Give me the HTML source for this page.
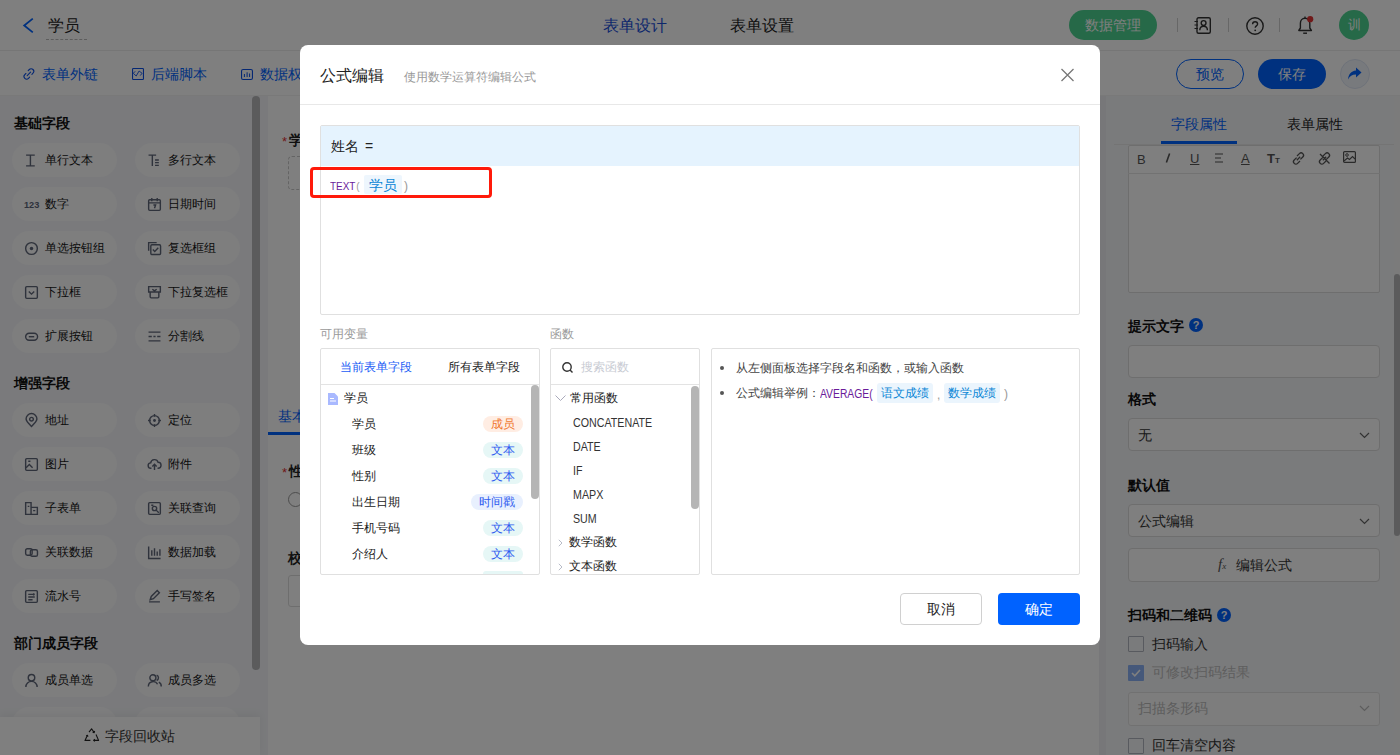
<!DOCTYPE html>
<html><head><meta charset="utf-8">
<style>
*{box-sizing:border-box;margin:0;padding:0}
html,body{width:1400px;height:755px;overflow:hidden;background:#fff;font-family:"Liberation Sans",sans-serif;color:#333}
.a{position:absolute}
.t{position:absolute;white-space:nowrap;line-height:1}
svg{position:absolute;overflow:visible}
.pill{position:absolute;width:105px;height:34px;border-radius:17px;background:#fcfcfd}
.pl{position:absolute;white-space:nowrap;line-height:1;font-size:12px;color:#151515}
.sec{position:absolute;white-space:nowrap;line-height:1;font-size:14px;font-weight:700;color:#111}
.ic{position:absolute;fill:none;stroke:#5b6170;stroke-width:1.3}
.sep{position:absolute;width:1px;height:14px;top:18px;background:#cfcfcf}
.fn{font-size:12px;color:#333;transform:scaleX(0.89);transform-origin:0 0}
</style></head><body>
<!-- ===== HEADER ===== -->
<div class="a" style="left:0;top:0;width:1400px;height:51px;background:#fff;border-bottom:1px solid #ededed"></div>
<svg style="left:22px;top:17px" width="12" height="17" viewBox="0 0 12 17"><path d="M10.8 1.6 L2.2 8.5 L10.8 15.4" fill="none" stroke="#0062ff" stroke-width="1.8"/></svg>
<div class="t" style="left:48px;top:18px;font-size:16px;color:#222">学员</div>
<div class="a" style="left:46px;top:39px;width:41px;border-top:1px dashed #bbb"></div>
<div class="t" style="left:603px;top:18px;font-size:16px;color:#1a4fd8">表单设计</div>
<div class="t" style="left:730px;top:18px;font-size:16px;color:#222">表单设置</div>
<div class="a" style="left:1069px;top:10px;width:88px;height:30px;border-radius:15px;background:#4cd291"></div>
<div class="t" style="left:1085px;top:18px;font-size:14px;color:#fff">数据管理</div>
<div class="sep" style="left:1177px"></div>
<div class="sep" style="left:1228px"></div>
<div class="sep" style="left:1279px"></div>
<!-- contacts icon -->
<svg style="left:1194px;top:17px" width="17" height="17" viewBox="0 0 17 17"><rect x="3" y="0.7" width="13.3" height="15.6" rx="1.5" fill="none" stroke="#333" stroke-width="1.4"/><circle cx="9.6" cy="6" r="2.4" fill="none" stroke="#333" stroke-width="1.4"/><path d="M5.8 13.2c0-2.4 1.7-4 3.8-4s3.8 1.6 3.8 4" fill="none" stroke="#333" stroke-width="1.4"/><path d="M0.5 4.5h3.5M0.5 8h3.5M0.5 11.5h3.5" stroke="#333" stroke-width="1.2"/></svg>
<!-- help -->
<svg style="left:1246px;top:17px" width="18" height="18" viewBox="0 0 18 18"><circle cx="9" cy="9" r="8.2" fill="none" stroke="#333" stroke-width="1.4"/><path d="M6.6 7.2c0-1.5 1.1-2.5 2.5-2.5s2.5 1 2.5 2.3c0 1.9-2.4 1.9-2.4 3.7" fill="none" stroke="#333" stroke-width="1.4"/><circle cx="9.2" cy="13.3" r="0.9" fill="#333"/></svg>
<!-- bell -->
<svg style="left:1298px;top:16px" width="15" height="19" viewBox="0 0 15 19"><path d="M7 2.2c-2.8 0-4.6 2.2-4.6 5v4.8L0.8 14.5h12.6L11.8 12V7.2c0-2.8-1.9-5-4.8-5z" fill="none" stroke="#333" stroke-width="1.4" stroke-linejoin="round"/><path d="M5.2 17.2h3.8" stroke="#333" stroke-width="1.4"/><path d="M7 0.5v1.6" stroke="#333" stroke-width="1.3"/><circle cx="12.2" cy="3.2" r="3.1" fill="#e03333"/></svg>
<div class="a" style="left:1339px;top:10px;width:30px;height:30px;border-radius:15px;background:#4cd291"></div>
<div class="t" style="left:1348px;top:18px;font-size:13px;color:#fff">训</div>

<!-- ===== TOOLBAR ===== -->
<div class="a" style="left:0;top:51px;width:1400px;height:45px;background:#fff;border-bottom:1px solid #f2f2f2"></div>
<svg style="left:22px;top:67px" width="14" height="14" viewBox="0 0 14 14"><path d="M6.2 3.6 L7.3 2.5 a2.6 2.6 0 0 1 3.7 3.7 L9.9 7.3" fill="none" stroke="#0a4fe6" stroke-width="1.1" stroke-linecap="round"/><path d="M7.6 10.2 L6.5 11.3 a2.6 2.6 0 0 1-3.7-3.7 L3.9 6.5" fill="none" stroke="#0a4fe6" stroke-width="1.1" stroke-linecap="round"/><path d="M5.2 8.6 L8.6 5.2" stroke="#0a4fe6" stroke-width="1.1" stroke-linecap="round"/></svg>
<div class="t" style="left:42px;top:67px;font-size:14px;color:#0062ff">表单外链</div>
<svg style="left:132px;top:68px" width="12" height="12" viewBox="0 0 12 12"><rect x="0.55" y="0.55" width="10.9" height="10.9" rx="0.8" fill="none" stroke="#0a4fe6" stroke-width="1.1"/><path d="M3.2 3.3L1.3 5.3 4.2 8 7.1 3 10.1 5.3 8.2 7.6" fill="none" stroke="#0a4fe6" stroke-width="0.9"/></svg>
<div class="t" style="left:151px;top:67px;font-size:14px;color:#0062ff">后端脚本</div>
<svg style="left:241px;top:69px" width="12" height="11" viewBox="0 0 12 11"><rect x="0.55" y="0.55" width="10.9" height="9.9" rx="1.5" fill="none" stroke="#0a4fe6" stroke-width="1.1"/><path d="M3.4 5v3M6.1 3.3v4.7M8.6 4.5v3.5" fill="none" stroke="#0a4fe6" stroke-width="1"/></svg>
<div class="t" style="left:260px;top:67px;font-size:14px;color:#0062ff">数据权限</div>
<div class="a" style="left:1176px;top:59px;width:68px;height:30px;border-radius:15px;border:1px solid #0062ff"></div>
<div class="t" style="left:1196px;top:67px;font-size:14px;color:#0062ff">预览</div>
<div class="a" style="left:1258px;top:59px;width:68px;height:30px;border-radius:15px;background:#0062ff"></div>
<div class="t" style="left:1278px;top:67px;font-size:14px;color:#fff">保存</div>
<div class="a" style="left:1340px;top:59px;width:30px;height:30px;border-radius:15px;background:#f0f4fb;border:1px solid #dde5f3"></div>
<svg style="left:1347px;top:67px" width="16" height="14" viewBox="0 0 16 14"><path d="M9 0.5 L14.5 5.5 L9 10.5 V7.5 C5 7.5 2.8 9 1 12.5 C1.5 7.5 4 4 9 3.5z" fill="#0062ff"/></svg>

<!-- ===== LEFT PANEL ===== -->
<div class="a" style="left:0;top:96px;width:268px;height:659px;background:#f4f5f8"></div>
<div class="a" style="left:252px;top:96px;width:8px;height:574px;border-radius:4px;background:#b6b7b9"></div>
<div class="sec" style="left:14px;top:116px">基础字段</div>
<div class="pill" style="left:12px;top:143px"></div>
<svg style="left:25px;top:154px" width="13" height="13" viewBox="0 0 12 12"><path d="M1 1h8M5 1v10M1 11h8" stroke="#5f6678" stroke-width="1.3" fill="none"/></svg>
<div class="pl" style="left:45px;top:154px">单行文本</div>
<div class="pill" style="left:135px;top:143px"></div>
<svg style="left:148px;top:154px" width="13" height="13" viewBox="0 0 12 12"><path d="M0.5 1h7M4 1v10M6.5 5.5h3.5M6.5 8h3.5M6.5 10.5h3.5" stroke="#5f6678" stroke-width="1.3" fill="none"/></svg>
<div class="pl" style="left:168px;top:154px">多行文本</div>
<div class="pill" style="left:12px;top:187px"></div>
<svg style="left:25px;top:198px" width="13" height="13" viewBox="0 0 12 12"><text x="-1" y="9" font-size="8.5" font-weight="bold" fill="#5d6578" font-family="Liberation Sans">123</text></svg>
<div class="pl" style="left:45px;top:198px">数字</div>
<div class="pill" style="left:135px;top:187px"></div>
<svg style="left:148px;top:198px" width="13" height="13" viewBox="0 0 12 12"><rect x="0.6" y="1.6" width="10.8" height="9.8" rx="1" stroke="#5f6678" stroke-width="1.3" fill="none"/><path d="M0.6 4.5h10.8M3.5 0v3M8.5 0v3M5 6.5h2l-1 3" stroke="#5f6678" stroke-width="1.3" fill="none"/></svg>
<div class="pl" style="left:168px;top:198px">日期时间</div>
<div class="pill" style="left:12px;top:231px"></div>
<svg style="left:25px;top:242px" width="13" height="13" viewBox="0 0 12 12"><circle cx="6" cy="6" r="5.4" stroke="#5f6678" stroke-width="1.3" fill="none"/><circle cx="6" cy="6" r="1.6" fill="#5d6578"/></svg>
<div class="pl" style="left:45px;top:242px">单选按钮组</div>
<div class="pill" style="left:135px;top:231px"></div>
<svg style="left:148px;top:242px" width="13" height="13" viewBox="0 0 12 12"><path d="M0.6 8V0.6H8" stroke="#5f6678" stroke-width="1.3" fill="none"/><rect x="2.6" y="2.6" width="9" height="9" rx="1" stroke="#5f6678" stroke-width="1.3" fill="none"/><path d="M4.5 7l1.7 1.7 3.3-3.3" stroke="#5f6678" stroke-width="1.3" fill="none"/></svg>
<div class="pl" style="left:168px;top:242px">复选框组</div>
<div class="pill" style="left:12px;top:275px"></div>
<svg style="left:25px;top:286px" width="13" height="13" viewBox="0 0 12 12"><rect x="0.6" y="0.6" width="10.8" height="10.8" rx="1" stroke="#5f6678" stroke-width="1.3" fill="none"/><path d="M3.5 5l2.5 2.5L8.5 5" stroke="#5f6678" stroke-width="1.3" fill="none"/></svg>
<div class="pl" style="left:45px;top:286px">下拉框</div>
<div class="pill" style="left:135px;top:275px"></div>
<svg style="left:148px;top:286px" width="13" height="13" viewBox="0 0 12 12"><path d="M0.6 0.6h10.8v5H0.6zM2 5.6v4.4a1 1 0 0 0 1 1h6a1 1 0 0 0 1-1V5.6M4 3l2 1.5 2-1.5" stroke="#5f6678" stroke-width="1.3" fill="none"/></svg>
<div class="pl" style="left:168px;top:286px">下拉复选框</div>
<div class="pill" style="left:12px;top:319px"></div>
<svg style="left:25px;top:330px" width="13" height="13" viewBox="0 0 12 12"><rect x="0.6" y="3" width="11" height="6.5" rx="3.2" stroke="#5f6678" stroke-width="1.3" fill="none"/><path d="M3.5 6.2h5" stroke="#5f6678" stroke-width="1.3" fill="none"/></svg>
<div class="pl" style="left:45px;top:330px">扩展按钮</div>
<div class="pill" style="left:135px;top:319px"></div>
<svg style="left:148px;top:330px" width="13" height="13" viewBox="0 0 12 12"><path d="M0.5 2h11M0.5 6h3M5 6h2M8.5 6h3M0.5 10h11" stroke="#5f6678" stroke-width="1.3" fill="none"/></svg>
<div class="pl" style="left:168px;top:330px">分割线</div>
<div class="pill" style="left:12px;top:403px"></div>
<svg style="left:25px;top:414px" width="13" height="13" viewBox="0 0 12 12"><path d="M6 11.5C3 8.5 1 6.3 1 4.6a5 5 0 0 1 10 0c0 1.7-2 3.9-5 6.9z" stroke="#5f6678" stroke-width="1.3" fill="none"/><circle cx="6" cy="4.8" r="1.7" stroke="#5f6678" stroke-width="1.3" fill="none"/></svg>
<div class="pl" style="left:45px;top:414px">地址</div>
<div class="pill" style="left:135px;top:403px"></div>
<svg style="left:148px;top:414px" width="13" height="13" viewBox="0 0 12 12"><circle cx="6" cy="6" r="4.5" stroke="#5f6678" stroke-width="1.3" fill="none"/><circle cx="6" cy="6" r="1.3" fill="#5d6578"/><path d="M6 0v2.5M6 9.5V12M0 6h2.5M9.5 6H12" stroke="#5f6678" stroke-width="1.3" fill="none"/></svg>
<div class="pl" style="left:168px;top:414px">定位</div>
<div class="pill" style="left:12px;top:447px"></div>
<svg style="left:25px;top:458px" width="13" height="13" viewBox="0 0 12 12"><rect x="0.6" y="0.6" width="10.8" height="10.8" rx="1" stroke="#5f6678" stroke-width="1.3" fill="none"/><path d="M1 9l3-3 3 3M3 3h2" stroke="#5f6678" stroke-width="1.3" fill="none"/></svg>
<div class="pl" style="left:45px;top:458px">图片</div>
<div class="pill" style="left:135px;top:447px"></div>
<svg style="left:148px;top:458px" width="13" height="13" viewBox="0 0 12 12"><path d="M3.2 9.5H2.8A2.5 2.5 0 0 1 2.5 4.5a3.5 3.5 0 0 1 6.8-.6A2.8 2.8 0 0 1 9.2 9.5H8.8M6 11V6M4 7.8L6 5.8 8 7.8" stroke="#5f6678" stroke-width="1.3" fill="none"/></svg>
<div class="pl" style="left:168px;top:458px">附件</div>
<div class="pill" style="left:12px;top:491px"></div>
<svg style="left:25px;top:502px" width="13" height="13" viewBox="0 0 12 12"><path d="M0.6 11.4V0.6h5v10.8zM5.6 5h5.8v6.4H5.6M2.5 4h1.5M7.5 8h2" stroke="#5f6678" stroke-width="1.3" fill="none"/></svg>
<div class="pl" style="left:45px;top:502px">子表单</div>
<div class="pill" style="left:135px;top:491px"></div>
<svg style="left:148px;top:502px" width="13" height="13" viewBox="0 0 12 12"><rect x="0.6" y="0.6" width="10.8" height="10.8" rx="1" stroke="#5f6678" stroke-width="1.3" fill="none"/><circle cx="6" cy="6" r="2" stroke="#5f6678" stroke-width="1.3" fill="none"/><path d="M7.5 7.5l2.5 2.5M3 3h2" stroke="#5f6678" stroke-width="1.3" fill="none"/></svg>
<div class="pl" style="left:168px;top:502px">关联查询</div>
<div class="pill" style="left:12px;top:535px"></div>
<svg style="left:25px;top:546px" width="13" height="13" viewBox="0 0 12 12"><rect x="0.6" y="2.5" width="6" height="6" rx="1.5" stroke="#5f6678" stroke-width="1.3" fill="none"/><rect x="5" y="3.5" width="6.5" height="6" rx="1.5" stroke="#5f6678" stroke-width="1.3" fill="none"/></svg>
<div class="pl" style="left:45px;top:546px">关联数据</div>
<div class="pill" style="left:135px;top:535px"></div>
<svg style="left:148px;top:546px" width="13" height="13" viewBox="0 0 12 12"><path d="M0.6 0.5v11h11M3.5 4v5M6 2v7M8.5 5v4M11 3v6" stroke="#5f6678" stroke-width="1.3" fill="none"/></svg>
<div class="pl" style="left:168px;top:546px">数据加载</div>
<div class="pill" style="left:12px;top:579px"></div>
<svg style="left:25px;top:590px" width="13" height="13" viewBox="0 0 12 12"><rect x="0.6" y="0.6" width="10.8" height="10.8" rx="1" stroke="#5f6678" stroke-width="1.3" fill="none"/><path d="M3 4h6M3 6.5h6M3 9h4M8 3v2" stroke="#5f6678" stroke-width="1.3" fill="none"/></svg>
<div class="pl" style="left:45px;top:590px">流水号</div>
<div class="pill" style="left:135px;top:579px"></div>
<svg style="left:148px;top:590px" width="13" height="13" viewBox="0 0 12 12"><path d="M1 11h10M2 9l1-3 5.5-5.5 2 2L5 8z" stroke="#5f6678" stroke-width="1.3" fill="none"/></svg>
<div class="pl" style="left:168px;top:590px">手写签名</div>
<div class="pill" style="left:12px;top:663px"></div>
<svg style="left:25px;top:674px" width="13" height="13" viewBox="0 0 12 12"><circle cx="6" cy="3.5" r="3" stroke="#5f6678" stroke-width="1.3" fill="none"/><path d="M0.8 12a5.2 5.2 0 0 1 10.4 0" stroke="#5f6678" stroke-width="1.3" fill="none"/></svg>
<div class="pl" style="left:45px;top:674px">成员单选</div>
<div class="pill" style="left:135px;top:663px"></div>
<svg style="left:148px;top:674px" width="13" height="13" viewBox="0 0 12 12"><circle cx="4.5" cy="3.5" r="2.8" stroke="#5f6678" stroke-width="1.3" fill="none"/><path d="M0.3 11.5a4.5 4.5 0 0 1 8.5-2M8 1a2.7 2.7 0 0 1 0 5M10 7.5a4 4 0 0 1 2.2 4" stroke="#5f6678" stroke-width="1.3" fill="none"/></svg>
<div class="pl" style="left:168px;top:674px">成员多选</div>
<div class="pill" style="left:12px;top:707px"></div>
<svg style="left:25px;top:718px" width="13" height="13" viewBox="0 0 12 12"></svg>
<div class="pl" style="left:45px;top:718px">部门单选</div>
<div class="pill" style="left:135px;top:707px"></div>
<svg style="left:148px;top:718px" width="13" height="13" viewBox="0 0 12 12"></svg>
<div class="pl" style="left:168px;top:718px">部门多选</div>
<div class="sec" style="left:14px;top:376px">增强字段</div>
<div class="sec" style="left:14px;top:636px">部门成员字段</div>
<div class="a" style="left:0;top:717px;width:260px;height:38px;background:#fff;box-shadow:0 -3px 8px rgba(0,0,0,0.05)"></div>
<svg style="left:84px;top:728px" width="16" height="14" viewBox="0 0 16 14"><path d="M5 4.2 L7.6 0.8 L10.2 4.6 M8.6 4.2 L10.2 4.6 L10.6 3" fill="none" stroke="#222" stroke-width="1.1" stroke-linejoin="round"/><path d="M12 6.5 L14.6 12.4 H9.6 M10.8 11.2 L9.6 12.4 L10.8 13.4" fill="none" stroke="#222" stroke-width="1.1" stroke-linejoin="round"/><path d="M6.4 12.4 H1 L3.4 7.2 M2.2 7.8 L3.4 7.2 L4 8.6" fill="none" stroke="#222" stroke-width="1.1" stroke-linejoin="round"/></svg>
<div class="t" style="left:105px;top:729px;font-size:14px;color:#333">字段回收站</div>

<!-- ===== CANVAS (visible slivers) ===== -->
<div class="t" style="left:282px;top:135px;font-size:13px;color:#e03030">*</div><div class="t" style="left:289px;top:133px;font-size:14px;color:#222;font-weight:bold">学员</div>
<div class="a" style="left:288px;top:156px;width:200px;height:34px;border:1px dashed #c8c8c8;border-radius:4px"></div>
<div class="t" style="left:278px;top:409px;font-size:14px;color:#0062ff">基本信息</div>
<div class="a" style="left:268px;top:432px;width:837px;height:1px;background:#e8e8e8"></div>
<div class="a" style="left:268px;top:432px;width:60px;height:3px;background:#0062ff"></div>
<div class="t" style="left:282px;top:466px;font-size:13px;color:#e03030">*</div><div class="t" style="left:289px;top:464px;font-size:14px;color:#222;font-weight:bold">性别</div>
<div class="a" style="left:288px;top:492px;width:15px;height:15px;border-radius:50%;border:1px solid #999"></div>
<div class="t" style="left:288px;top:551px;font-size:14px;color:#222;font-weight:bold">校区</div>
<div class="a" style="left:288px;top:575px;width:200px;height:32px;border:1px solid #ddd;border-radius:3px"></div>

<!-- ===== RIGHT PANEL ===== -->
<div class="a" style="left:1099px;top:96px;width:7px;height:659px;background:#eeeff2"></div>
<div class="a" style="left:1106px;top:96px;width:294px;height:659px;background:#f5f6f8"></div>
<div class="t" style="left:1171px;top:117px;font-size:14px;color:#0062ff">字段属性</div>
<div class="t" style="left:1287px;top:117px;font-size:14px;color:#222">表单属性</div>
<div class="a" style="left:1114px;top:144px;width:286px;height:1px;background:#e8e8e8"></div>
<div class="a" style="left:1161px;top:141px;width:76px;height:3px;background:#0062ff"></div>
<div class="a" style="left:1128px;top:145px;width:252px;height:148px;border:1px solid #dcdcdc;border-radius:2px;background:#fff"></div>
<div class="a" style="left:1128px;top:173px;width:252px;height:1px;background:#e5e5e5"></div>
<div class="t" style="left:1137px;top:153px;font-size:13px;color:#555">B</div>
<svg style="left:1165px;top:153px" width="6" height="10" viewBox="0 0 6 10"><path d="M4.6 0.5L1.4 9.5" stroke="#555" stroke-width="1.6"/></svg>
<div class="t" style="left:1190px;top:152px;font-size:13px;color:#555;text-decoration:underline">U</div>
<svg style="left:1214px;top:153px" width="10" height="10" viewBox="0 0 10 10"><path d="M1 1h8M1 5h6M1 9h8" stroke="#555" stroke-width="1.1"/></svg>
<div class="t" style="left:1241px;top:152px;font-size:13px;color:#555;text-decoration:underline">A</div>
<div class="t" style="left:1267px;top:152px;font-size:13px;color:#555;font-weight:bold">T<span style="font-size:8px">T</span></div>
<svg style="left:1292px;top:152px" width="13" height="13" viewBox="0 0 13 13"><path d="M4.8 8.2l3.4-3.4M4.6 5.6L2.2 8a2.4 2.4 0 0 0 3.4 3.4L8 9M8.4 7.4l2.4-2.4a2.4 2.4 0 0 0-3.4-3.4L5 4" fill="none" stroke="#555" stroke-width="1.3"/></svg>
<svg style="left:1318px;top:152px" width="13" height="13" viewBox="0 0 13 13"><path d="M4.8 8.2l3.4-3.4M4.6 5.6L2.2 8a2.4 2.4 0 0 0 3.4 3.4L8 9M8.4 7.4l2.4-2.4a2.4 2.4 0 0 0-3.4-3.4L5 4M2 2l9.5 9.5" fill="none" stroke="#555" stroke-width="1.3"/></svg>
<svg style="left:1343px;top:151px" width="13" height="12" viewBox="0 0 13 12"><rect x="0.6" y="0.6" width="11.8" height="10.8" rx="1" fill="none" stroke="#555" stroke-width="1.2"/><circle cx="4" cy="4" r="1.3" fill="none" stroke="#555"/><path d="M1 10l3.5-3 2 1.5 3-3 2.5 2.5" fill="none" stroke="#555" stroke-width="1.1"/></svg>
<div class="sec" style="left:1128px;top:319px">提示文字</div>
<div class="a" style="left:1189px;top:318px;width:14px;height:14px;border-radius:50%;background:#0062ff;color:#fff;font-size:11px;line-height:14px;text-align:center;font-weight:bold">?</div>
<div class="a" style="left:1128px;top:345px;width:252px;height:33px;border:1px solid #dcdcdc;border-radius:4px;background:#fff"></div>
<div class="sec" style="left:1128px;top:392px">格式</div>
<div class="a" style="left:1128px;top:418px;width:252px;height:33px;border:1px solid #dcdcdc;border-radius:4px;background:#fff"></div>
<div class="t" style="left:1138px;top:428px;font-size:14px;color:#333">无</div>
<svg style="left:1359px;top:432px" width="11" height="7" viewBox="0 0 11 7"><path d="M1 1l4.5 4.5L10 1" fill="none" stroke="#666" stroke-width="1.2"/></svg>
<div class="sec" style="left:1128px;top:478px">默认值</div>
<div class="a" style="left:1128px;top:504px;width:252px;height:33px;border:1px solid #dcdcdc;border-radius:4px;background:#fff"></div>
<div class="t" style="left:1138px;top:514px;font-size:14px;color:#333">公式编辑</div>
<svg style="left:1359px;top:518px" width="11" height="7" viewBox="0 0 11 7"><path d="M1 1l4.5 4.5L10 1" fill="none" stroke="#666" stroke-width="1.2"/></svg>
<div class="a" style="left:1128px;top:548px;width:252px;height:34px;border:1px solid #dcdcdc;border-radius:4px;background:#fff"></div>
<div class="t" style="left:1218px;top:557px;font-size:15px;color:#555;font-family:'Liberation Serif',serif;font-style:italic">f<span style="font-size:9px">x</span></div>
<div class="t" style="left:1236px;top:558px;font-size:14px;color:#333">编辑公式</div>
<div class="sec" style="left:1128px;top:608px">扫码和二维码</div>
<div class="a" style="left:1217px;top:608px;width:14px;height:14px;border-radius:50%;background:#0062ff;color:#fff;font-size:11px;line-height:14px;text-align:center;font-weight:bold">?</div>
<div class="a" style="left:1128px;top:636px;width:16px;height:16px;border:1px solid #b0b4be;border-radius:1px"></div>
<div class="t" style="left:1152px;top:637px;font-size:14px;color:#333">扫码输入</div>
<div class="a" style="left:1128px;top:665px;width:16px;height:16px;border-radius:1px;background:#8ab0f5"></div>
<svg style="left:1131px;top:669px" width="10" height="8" viewBox="0 0 10 8"><path d="M1 4l2.8 2.8L9 1" fill="none" stroke="#fff" stroke-width="1.6"/></svg>
<div class="t" style="left:1152px;top:665px;font-size:14px;color:#bdbdbd">可修改扫码结果</div>
<div class="a" style="left:1128px;top:692px;width:252px;height:34px;border:1px solid #e3e3e3;border-radius:3px;background:#fafafa"></div>
<div class="t" style="left:1138px;top:701px;font-size:14px;color:#bbb">扫描条形码</div>
<svg style="left:1359px;top:705px" width="11" height="7" viewBox="0 0 11 7"><path d="M1 1l4.5 4.5L10 1" fill="none" stroke="#bbb" stroke-width="1.2"/></svg>
<div class="a" style="left:1128px;top:738px;width:16px;height:16px;border:1px solid #b0b4be;border-radius:1px"></div>
<div class="t" style="left:1152px;top:738px;font-size:14px;color:#333">回车清空内容</div>
<div class="a" style="left:1394px;top:96px;width:6px;height:659px;background:#f6f6f7"></div>
<div class="a" style="left:1394px;top:274px;width:6px;height:262px;border-radius:3px;background:#b6b7b9"></div>

<!-- ===== OVERLAY ===== -->
<div class="a" style="left:0;top:0;width:1400px;height:755px;background:rgba(0,0,0,.5)"></div>

<!-- ===== MODAL ===== -->
<div class="a" style="left:300px;top:45px;width:800px;height:600px;background:#fff;border-radius:8px"></div>
<div class="t" style="left:320px;top:68px;font-size:16px;color:#222">公式编辑</div>
<div class="t" style="left:404px;top:71px;font-size:12px;color:#999">使用数学运算符编辑公式</div>
<svg style="left:1061px;top:69px" width="13" height="12" viewBox="0 0 13 12"><path d="M0.5 0L12.5 12M12.5 0L0.5 12" stroke="#777" stroke-width="1.3"/></svg>
<div class="a" style="left:300px;top:104px;width:800px;height:1px;background:#e8e8e8"></div>
<!-- formula box -->
<div class="a" style="left:320px;top:125px;width:760px;height:190px;border:1px solid #e0e0e0;border-radius:2px"></div>
<div class="a" style="left:321px;top:126px;width:758px;height:40px;background:#e5f3fe"></div>
<div class="t" style="left:331px;top:139px;font-size:14px;color:#222">姓名 <span style="margin-left:2px">=</span></div>
<div class="t" style="left:330px;top:181px;font-size:11px;color:#6a1b9a;transform:scaleX(0.9);transform-origin:0 0">TEXT<span style="color:#999;margin-left:1px">(</span></div>
<div class="a" style="left:364px;top:175px;width:38px;height:19px;background:#eef6fd;border-radius:2px"></div>
<div class="t" style="left:369px;top:178px;font-size:14px;color:#0a86d6">学员</div>
<div class="t" style="left:404px;top:180px;font-size:12px;color:#999">)</div>
<div class="a" style="left:310px;top:167px;width:182px;height:31px;border:3px solid #ff1a0a;border-radius:4px"></div>
<!-- labels -->
<div class="t" style="left:320px;top:328px;font-size:12px;color:#999">可用变量</div>
<div class="t" style="left:550px;top:328px;font-size:12px;color:#999">函数</div>
<!-- variables panel -->
<div class="a" style="left:320px;top:348px;width:220px;height:227px;border:1px solid #e0e0e0;border-radius:2px"></div>
<div class="a" style="left:321px;top:384px;width:218px;height:1px;background:#e3e3e3"></div>
<div class="t" style="left:340px;top:361px;font-size:12px;color:#1a5cf5">当前表单字段</div>
<div class="t" style="left:448px;top:361px;font-size:12px;color:#222">所有表单字段</div>
<svg style="left:328px;top:393px" width="10" height="12" viewBox="0 0 10 12"><path d="M0 0h6.5L10 3.5V12H0z" fill="#a9b9ff"/><path d="M2 5.5h4M2 8h6" stroke="#fff" stroke-width="1.2"/></svg>
<div class="t" style="left:344px;top:392px;font-size:12px;color:#222">学员</div>
<div class="t" style="left:352px;top:418px;font-size:12px;color:#222">学员</div>
<div class="a" style="left:483px;top:416px;width:40px;height:16px;border-radius:8px;background:#ffede3"></div>
<div class="t" style="left:491px;top:418px;font-size:12px;color:#f0772d">成员</div>
<div class="t" style="left:352px;top:444px;font-size:12px;color:#222">班级</div>
<div class="a" style="left:483px;top:442px;width:40px;height:16px;border-radius:8px;background:#e6f7f6"></div>
<div class="t" style="left:491px;top:444px;font-size:12px;color:#2f5cf0">文本</div>
<div class="t" style="left:352px;top:470px;font-size:12px;color:#222">性别</div>
<div class="a" style="left:483px;top:468px;width:40px;height:16px;border-radius:8px;background:#e6f7f6"></div>
<div class="t" style="left:491px;top:470px;font-size:12px;color:#2f5cf0">文本</div>
<div class="t" style="left:352px;top:496px;font-size:12px;color:#222">出生日期</div>
<div class="a" style="left:471px;top:494px;width:52px;height:16px;border-radius:8px;background:#e8f0fe"></div>
<div class="t" style="left:479px;top:496px;font-size:12px;color:#2f5cf0">时间戳</div>
<div class="t" style="left:352px;top:522px;font-size:12px;color:#222">手机号码</div>
<div class="a" style="left:483px;top:520px;width:40px;height:16px;border-radius:8px;background:#e6f7f6"></div>
<div class="t" style="left:491px;top:522px;font-size:12px;color:#2f5cf0">文本</div>
<div class="t" style="left:352px;top:548px;font-size:12px;color:#222">介绍人</div>
<div class="a" style="left:483px;top:546px;width:40px;height:16px;border-radius:8px;background:#e6f7f6"></div>
<div class="t" style="left:491px;top:548px;font-size:12px;color:#2f5cf0">文本</div>
<div class="a" style="left:483px;top:571px;width:40px;height:3px;border-radius:8px 8px 0 0;background:#e6f7f6"></div>
<div class="a" style="left:531px;top:385px;width:8px;height:114px;border-radius:4px;background:#b5b5b5"></div>
<!-- functions panel -->
<div class="a" style="left:550px;top:348px;width:150px;height:227px;border:1px solid #e0e0e0;border-radius:2px"></div>
<div class="a" style="left:551px;top:384px;width:148px;height:1px;background:#e3e3e3"></div>
<svg style="left:562px;top:362px" width="11" height="11" viewBox="0 0 11 11"><circle cx="5" cy="5" r="4.2" fill="none" stroke="#333" stroke-width="1.4"/><path d="M8 8l2.5 2.5" stroke="#333" stroke-width="1.4"/></svg>
<div class="t" style="left:581px;top:361px;font-size:12px;color:#c8cbd3">搜索函数</div>
<svg style="left:555px;top:395px" width="11" height="7" viewBox="0 0 11 7"><path d="M0.5 0.5l5 5 5-5" fill="none" stroke="#aab" stroke-width="1"/></svg>
<div class="t" style="left:570px;top:392px;font-size:12px;color:#222">常用函数</div>
<div class="t fn" style="left:573px;top:417px">CONCATENATE</div>
<div class="t fn" style="left:573px;top:441px">DATE</div>
<div class="t fn" style="left:573px;top:465px">IF</div>
<div class="t fn" style="left:573px;top:489px">MAPX</div>
<div class="t fn" style="left:573px;top:513px">SUM</div>
<svg style="left:558px;top:539px" width="5" height="8" viewBox="0 0 5 8"><path d="M0.8 0.8l3.2 3.2-3.2 3.2" fill="none" stroke="#b8bcc8" stroke-width="1"/></svg>
<div class="t" style="left:569px;top:536px;font-size:12px;color:#222">数学函数</div>
<svg style="left:558px;top:563px" width="5" height="8" viewBox="0 0 5 8"><path d="M0.8 0.8l3.2 3.2-3.2 3.2" fill="none" stroke="#b8bcc8" stroke-width="1"/></svg>
<div class="t" style="left:569px;top:560px;font-size:12px;color:#222">文本函数</div>
<div class="a" style="left:691px;top:386px;width:8px;height:123px;border-radius:4px;background:#b5b5b5"></div>
<!-- description panel -->
<div class="a" style="left:711px;top:348px;width:369px;height:227px;border:1px solid #e0e0e0;border-radius:2px"></div>
<div class="a" style="left:720px;top:366px;width:4px;height:4px;border-radius:2px;background:#555"></div>
<div class="t" style="left:736px;top:362px;font-size:12px;color:#444">从左侧面板选择字段名和函数，或输入函数</div>
<div class="a" style="left:720px;top:391px;width:4px;height:4px;border-radius:2px;background:#555"></div>
<div class="t" style="left:736px;top:387px;font-size:12px;color:#444">公式编辑举例：</div>
<div class="t" style="left:820px;top:388px;font-size:12px;color:#6a1b9a;transform:scaleX(0.86);transform-origin:0 0">AVERAGE(</div>
<div class="a" style="left:877px;top:383px;width:56px;height:20px;background:#ebf5fd;border-radius:3px"></div>
<div class="t" style="left:881px;top:387px;font-size:12px;color:#0a86d6">语文成绩</div>
<div class="t" style="left:937px;top:389px;font-size:12px;color:#999">,</div>
<div class="a" style="left:944px;top:383px;width:56px;height:20px;background:#ebf5fd;border-radius:3px"></div>
<div class="t" style="left:948px;top:387px;font-size:12px;color:#0a86d6">数学成绩</div>
<div class="t" style="left:1004px;top:388px;font-size:12px;color:#999">)</div>
<!-- buttons -->
<div class="a" style="left:900px;top:593px;width:82px;height:32px;border:1px solid #d0d0d0;border-radius:4px;background:#fff"></div>
<div class="t" style="left:927px;top:602px;font-size:14px;color:#222">取消</div>
<div class="a" style="left:998px;top:593px;width:82px;height:32px;border-radius:4px;background:#0062ff"></div>
<div class="t" style="left:1025px;top:602px;font-size:14px;color:#fff;font-weight:500">确定</div>

</body></html>
